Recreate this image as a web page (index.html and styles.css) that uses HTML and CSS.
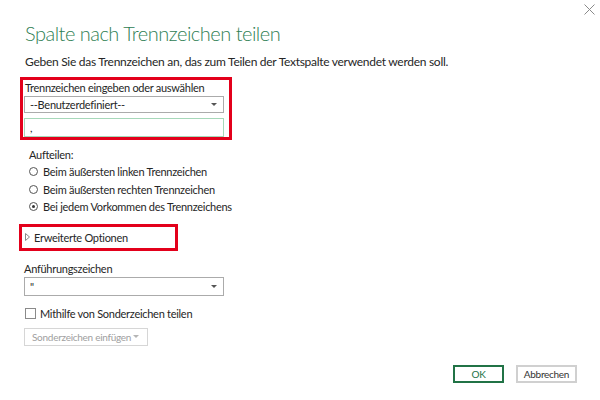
FILE: index.html
```html
<!DOCTYPE html>
<html lang="de">
<head>
<meta charset="utf-8">
<link rel="stylesheet" href="styles.css">
</head>
<body>
<div class="dialog">
  <div class="header">
    <h1 class="title">Spalte nach Trennzeichen teilen</h1>
    <div class="close">
      <svg width="11" height="11" viewBox="0 0 11 11"><path d="M0.5 0.5 L10.5 10.5 M10.5 0.5 L0.5 10.5" stroke="#8a8a8a" stroke-width="1" fill="none"/></svg>
    </div>
  </div>
  <p class="subtitle">Geben Sie das Trennzeichen an, das zum Teilen der Textspalte verwendet werden soll.</p>

  <div class="highlight delim">
    <div class="label">Trennzeichen eingeben oder auswählen</div>
    <div class="select">
      <span>--Benutzerdefiniert--</span>
      <span class="caret"></span>
    </div>
    <div class="input">,</div>
  </div>

  <div class="split">
    <div class="split-label">Aufteilen:</div>
    <label class="radio"><span class="circle"></span>Beim äußersten linken Trennzeichen</label>
    <label class="radio"><span class="circle"></span>Beim äußersten rechten Trennzeichen</label>
    <label class="radio"><span class="circle checked"></span>Bei jedem Vorkommen des Trennzeichens</label>
  </div>

  <div class="highlight advanced">
    <svg class="tri" width="5" height="8" viewBox="0 0 5 8"><path d="M0.5 0.5 L4.5 4 L0.5 7.5 Z" fill="none" stroke="#8a8a8a" stroke-width="1"/></svg>
    <span>Erweiterte Optionen</span>
  </div>

  <div class="label quote-label">Anführungszeichen</div>
  <div class="select quote">
    <span>"</span>
    <span class="caret"></span>
  </div>

  <label class="check"><span class="box"></span>Mithilfe von Sonderzeichen teilen</label>

  <div class="special">
    <span>Sonderzeichen einfügen</span>
    <span class="caret light"></span>
  </div>

  <div class="footer">
    <div class="btn ok">OK</div>
    <div class="btn cancel">Abbrechen</div>
  </div>
</div>
</body>
</html>
```
FILE: styles.css
```css
html, body {
  margin: 0;
  padding: 0;
  background: #ffffff;
}
body {
  width: 600px;
  height: 400px;
  overflow: hidden;
  font-family: "Lato", "Open Sans", sans-serif;
  font-size: 11px;
  letter-spacing: -0.28px;
  color: #262626;
  white-space: nowrap;
}
.dialog {
  display: flex;
  flex-direction: column;
  align-items: flex-start;
  padding: 0 0 0 24px;
  height: 400px;
  box-sizing: border-box;
}
.header {
  display: flex;
  justify-content: space-between;
  align-items: flex-start;
  width: 576px;
}
.title {
  margin: 21px 0 0 1px;
  font-size: 20px;
  letter-spacing: -0.5px;
  font-weight: 300;
  line-height: 24px;
  color: #2f8054;
}
.close {
  margin: 4px 5px 0 0;
  line-height: 0;
}
.subtitle {
  margin: 9px 0 0 1px;
  line-height: 16px;
  font-size: 12px;
}
.highlight {
  border: 3px solid #e3001b;
  box-sizing: border-box;
}
.delim {
  margin: 7px 0 0 -4px;
  width: 212px;
  height: 63px;
  padding: 0 5px 0 1px;
  display: flex;
  flex-direction: column;
}
.label {
  line-height: 14px;
  margin-top: 1px;
  padding-left: 1px;
}
.select {
  display: flex;
  justify-content: space-between;
  align-items: center;
  width: 200px;
  height: 17px;
  box-sizing: border-box;
  border: 1px solid #ababab;
  padding: 0 6px 0 5px;
  margin-top: 1px;
  line-height: 15px;
}
.caret {
  width: 0;
  height: 0;
  border-left: 3px solid transparent;
  border-right: 3px solid transparent;
  border-top: 3px solid #555;
}
.caret.light {
  border-top-color: #b5b5b5;
}
.input {
  margin-top: 5px;
  width: 200px;
  height: 19px;
  box-sizing: border-box;
  border: 1px solid #a6d8b9;
  padding: 0 5px;
  line-height: 17px;
}
.split {
  margin: 6px 0 0 5px;
  display: flex;
  flex-direction: column;
}
.split-label {
  line-height: 17px;
}
.radio {
  display: flex;
  align-items: center;
  line-height: 17.5px;
}
.circle {
  width: 7px;
  height: 7px;
  border: 1px solid #555;
  border-radius: 50%;
  margin-right: 5px;
  position: relative;
  flex: none;
}
.circle.checked::after {
  content: "";
  position: absolute;
  left: 2px;
  top: 2px;
  width: 3px;
  height: 3px;
  border-radius: 50%;
  background: #333;
}
.advanced {
  margin: 8px 0 0 -5px;
  width: 159px;
  height: 27px;
  display: flex;
  align-items: center;
  padding-left: 3px;
}
.tri {
  margin-right: 4px;
}
.quote-label {
  margin-top: 11px;
  padding-left: 0;
}
.select.quote {
  height: 19px;
  margin-top: 1px;
}
.check {
  display: flex;
  align-items: center;
  margin: 11px 0 0 1px;
  line-height: 14px;
}
.box {
  width: 11px;
  height: 11px;
  border: 1px solid #8a8a8a;
  box-sizing: border-box;
  margin-right: 4px;
  flex: none;
}
.special {
  margin-top: 7px;
  width: 124px;
  height: 18px;
  box-sizing: border-box;
  border: 1px solid #d6d6d6;
  display: flex;
  align-items: center;
  justify-content: space-between;
  padding: 0 8px 0 7px;
  color: #a0a0a0;
  font-size: 10px;
}
.footer {
  margin-top: auto;
  margin-bottom: 17px;
  align-self: flex-end;
  display: flex;
  gap: 12px;
  padding-right: 23px;
}
.btn {
  height: 18px;
  box-sizing: border-box;
  display: flex;
  align-items: center;
  justify-content: center;
  font-size: 10px;
}
.ok {
  width: 51px;
  border: 2px solid #217346;
  color: #217346;
}
.cancel {
  width: 61px;
  border: 2px solid #d0d0d0;
  color: #333;
}
```
